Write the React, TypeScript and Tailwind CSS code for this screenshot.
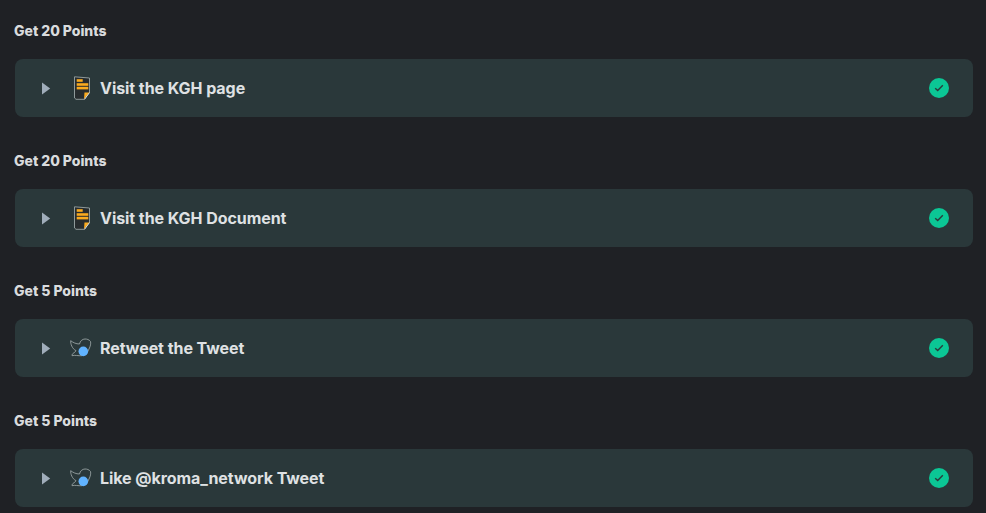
import React from "react";

type Task = { points: number; title: string; icon: "doc" | "bird" };

const tasks: Task[] = [
  { points: 20, title: "Visit the KGH page", icon: "doc" },
  { points: 20, title: "Visit the KGH Document", icon: "doc" },
  { points: 5, title: "Retweet the Tweet", icon: "bird" },
  { points: 5, title: "Like @kroma_network Tweet", icon: "bird" },
];

const DocIcon = () => (
  <svg width="22" height="24" viewBox="0 0 22 24" fill="none" className="-ml-[2px]">
    <path d="M5.5 0.8 20.5 2V16.5L15.5 23.3H7L5.5 22Z" fill="#272c2e" stroke="#8f9a9a" strokeWidth="1" />
    <rect x="7.7" y="3.2" width="6" height="2.6" fill="#fbab1e" />
    <rect x="7.7" y="7.2" width="11.6" height="2.6" fill="#fbab1e" />
    <rect x="7.7" y="10.8" width="11.6" height="2.6" fill="#fbab1e" />
    <path d="M15 23 15.5 16.5H20.5Z" fill="#fbab1e" />
    <path d="M15.5 23.3 20.5 16.5" stroke="#e8e8e8" strokeWidth="0.8" />
  </svg>
);

const BirdIcon = () => (
  <svg width="24" height="24" viewBox="0 0 24 24" fill="none">
    <path
      d="M1.7 4.7C4 6.5 7 8 10.5 8C11 5 13.5 3 16 3C18 3 20 3.5 21.5 5.5C22 7.5 21.5 10 20 13C19.5 14.5 18.5 16 17.5 17M1.7 4.7C1.5 8 3 12.5 7 14.7L5.5 16.5C4.5 17 3.5 17.5 3 19C3 19.5 3 19.7 3 19.7C6 18.8 9 20 13 19.7"
      stroke="#a3adad"
      strokeWidth="0.8"
    />
    <circle cx="14.3" cy="15.4" r="4.8" fill="#61b3ff" />
  </svg>
);

const CheckBadge = () => (
  <div className="flex h-5 w-5 items-center justify-center rounded-full bg-[#0bc795]">
    <svg width="10" height="8" viewBox="0 0 10 8" fill="none">
      <path d="M1.2 4.2 3.7 6.5 8.8 1.3" stroke="#2b3a3b" strokeWidth="1.4" />
    </svg>
  </div>
);

export default function App() {
  return (
    <div
      className="flex h-[513px] w-[986px] flex-col gap-[34px] overflow-hidden bg-[#1f2125] pt-[21px] pl-[14px] pr-[13px]"
      style={{ fontFamily: "Inter, sans-serif" }}
    >
      {tasks.map((task) => (
        <section key={task.title} className="flex flex-col gap-[18px]">
          <h2 className="h-5 text-sm leading-5 font-extrabold tracking-[-0.03px] text-[#d9dbdd]">
            Get {task.points} Points
          </h2>
          <div className="ml-px flex h-[58px] items-center rounded-lg bg-[#2a383a] pr-[24px] pl-[27px]">
            <svg width="9" height="13" viewBox="0 0 9 13" className="shrink-0">
              <path d="M0 0.6 8.2 6.5 0 12.4Z" fill="#a0adba" />
            </svg>
            <span className="ml-[15px] flex w-[30px] shrink-0 justify-center">
              {task.icon === "doc" ? <DocIcon /> : <BirdIcon />}
            </span>
            <span className="ml-[4px] flex-1 text-base font-bold tracking-[-0.06px] text-[#dfe1e3]">
              {task.title}
            </span>
            <CheckBadge />
          </div>
        </section>
      ))}
    </div>
  );
}
